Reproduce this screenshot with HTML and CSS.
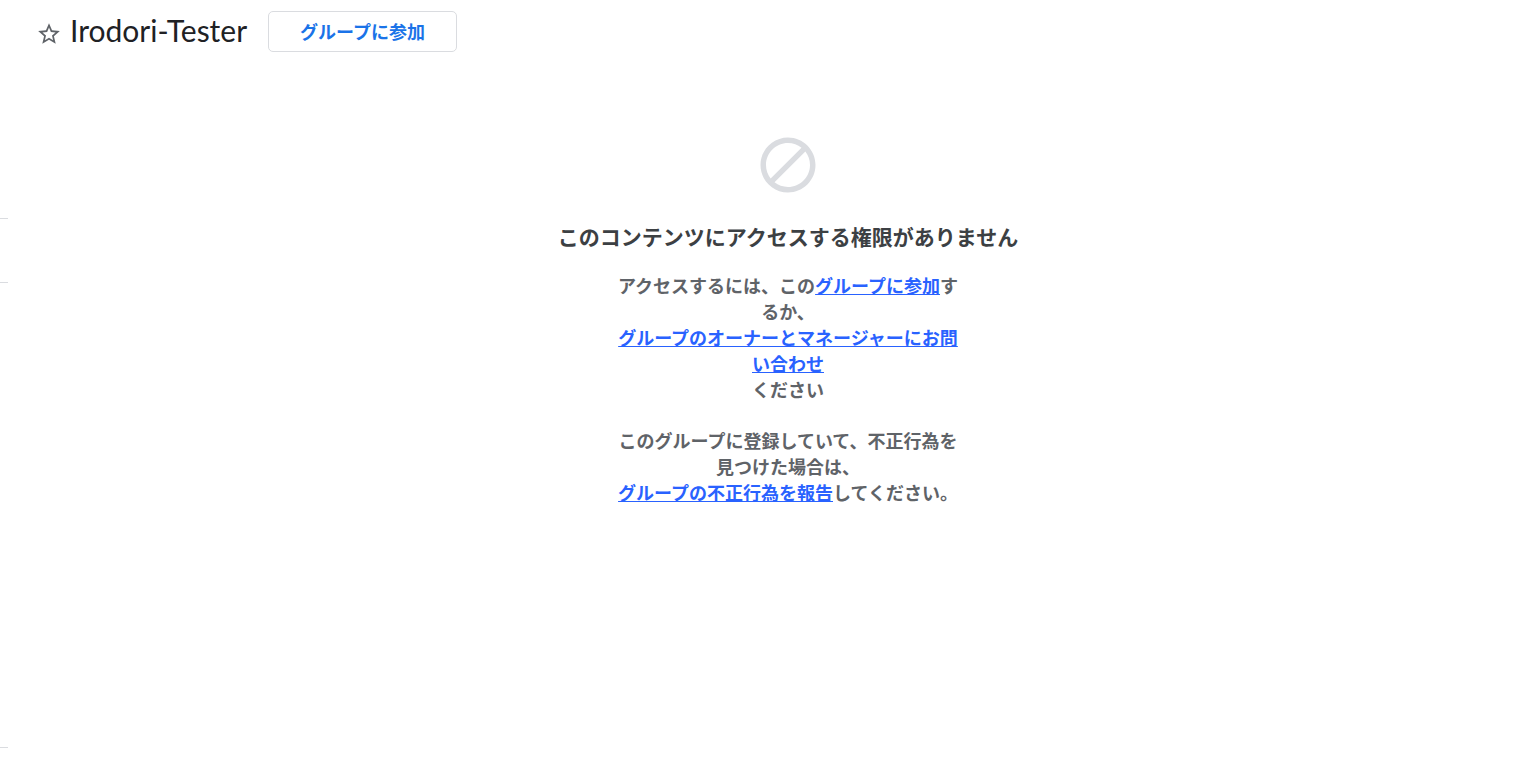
FILE: index.html
```html
<!DOCTYPE html>
<html lang="ja">
<head>
<meta charset="utf-8">
<meta name="viewport" content="width=device-width, initial-scale=1">
<title>Irodori-Tester</title>
<link rel="stylesheet" href="styles.css">
</head>
<body>
<div class="page">
  <aside class="rail">
    <div class="rail-top"></div>
    <div class="rail-item"></div>
    <div class="rail-body"></div>
  </aside>
  <div class="content">
    <header class="group-header">
      <button class="star" type="button" aria-label="お気に入りに追加">
        <svg class="star-icon" viewBox="0 0 24 24" aria-hidden="true"><path d="M22 9.24l-7.19-.62L12 2 9.19 8.63 2 9.24l5.46 4.73L5.82 21 12 17.27 18.18 21l-1.63-7.03L22 9.24zM12 15.4l-3.76 2.27 1-4.28-3.32-2.88 4.38-.38L12 6.1l1.71 4.04 4.38.38-3.32 2.88 1 4.28L12 15.4z"/></svg>
      </button>
      <h1 class="group-name">Irodori-Tester</h1>
      <button class="join" type="button">グループに参加</button>
    </header>
    <main class="notice">
      <svg class="blocked-icon" viewBox="0 0 24 24" aria-hidden="true"><path d="M12 2C6.48 2 2 6.48 2 12s4.48 10 10 10 10-4.480 10-10S17.520 2 12 2zM4 12c0-4.420 3.580-8 8-8 1.850 0 3.550.630 4.900 1.690L5.690 16.900C4.630 15.550 4 13.850 4 12zm8 8c-1.850 0-3.550-.630-4.900-1.690L18.310 7.100C19.370 8.450 20 10.150 20 12c0 4.420-3.580 8-8 8z"/></svg>
      <h2 class="notice-title">このコンテンツにアクセスする権限がありません</h2>
      <div class="notice-text">
        <p>アクセスするには、この<a href="#join">グループに参加</a>するか、<br><a href="#contact">グループのオーナーとマネージャーにお問い合わせ</a><br>ください</p>
        <p>このグループに登録していて、不正行為を見つけた場合は、<br><a href="#report">グループの不正行為を報告</a>してください。</p>
      </div>
    </main>
  </div>
</div>
</body>
</html>
```

FILE: styles.css
```css
* {
  box-sizing: border-box;
}

body {
  margin: 0;
  background: #fff;
  color: #202124;
  font-family: Lato, "Noto Sans CJK JP", sans-serif;
}

.page {
  display: flex;
  min-height: 100vh;
}

.rail {
  display: flex;
  flex-direction: column;
  width: 8px;
  margin-right: 28px;
  padding-bottom: 29px;
}

.rail-top,
.rail-item,
.rail-body {
  border-bottom: 1px solid #dadce0;
}

.rail-top {
  height: 219px;
}

.rail-item {
  height: 64px;
}

.rail-body {
  flex: 1;
}

.content {
  flex: 1;
  min-width: 0;
}

.group-header {
  display: flex;
  align-items: center;
  padding-top: 11px;
}

.star {
  display: flex;
  margin: 4px 8px 0 0;
  padding: 0;
  border: 0;
  background: none;
}

.star-icon {
  width: 26px;
  height: 26px;
  fill: #5f6368;
}

.group-name {
  margin: 0 21px 4px 0;
  font-size: 30px;
  font-weight: 400;
  line-height: 36px;
}

.join {
  padding: 0 31px;
  border: 1px solid #dadce0;
  border-radius: 5px;
  background: #fff;
  color: #1a73e8;
  font-family: "Noto Sans CJK JP", sans-serif;
  font-size: 18px;
  font-weight: 700;
  line-height: 39px;
}

.notice {
  display: flex;
  flex-direction: column;
  align-items: center;
  padding-top: 80px;
  font-family: "Noto Sans CJK JP", sans-serif;
  font-weight: 700;
  text-align: center;
}

.blocked-icon {
  width: 66px;
  height: 66px;
  fill: #dadce0;
}

.notice-title {
  margin: 22px 0 20px;
  color: #3c4043;
  font-size: 21px;
  font-weight: 700;
  line-height: 32px;
}

.notice-text {
  max-width: 348px;
  color: #5f6368;
  font-size: 18px;
  line-height: 26px;
}

.notice-text p {
  margin: 0 0 25px;
}

.notice-text a {
  color: #2962ff;
}
```
